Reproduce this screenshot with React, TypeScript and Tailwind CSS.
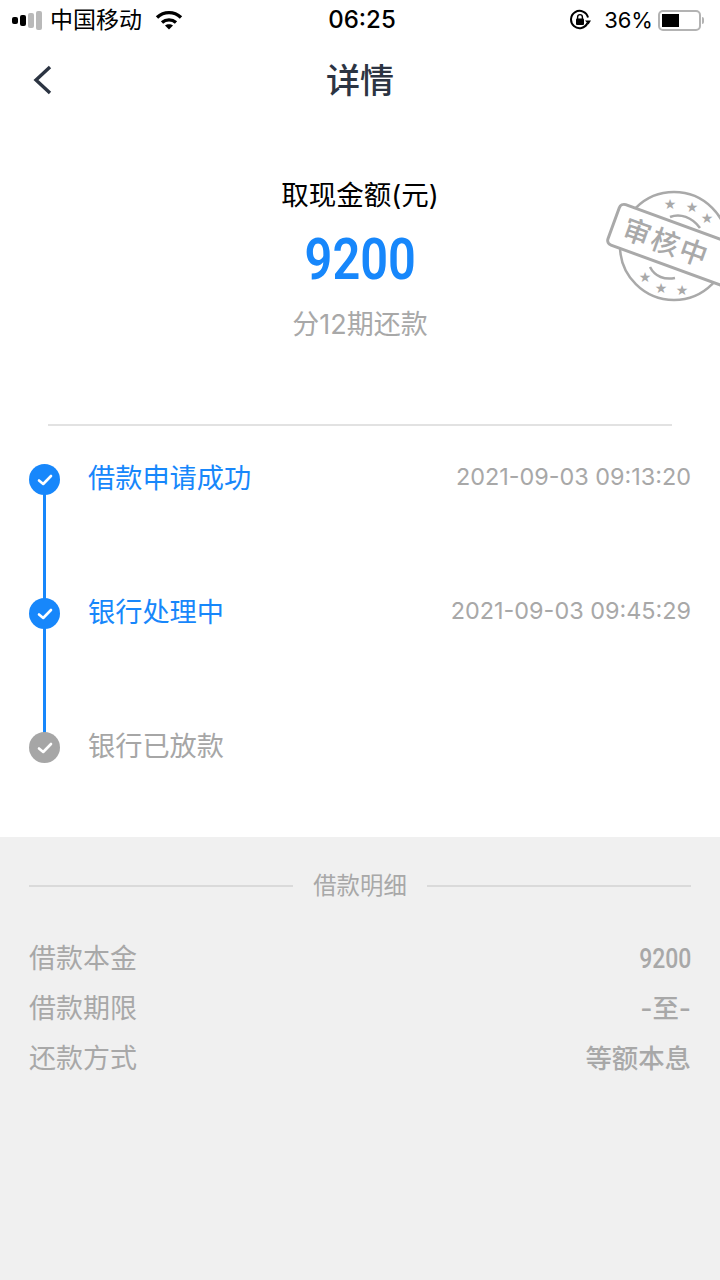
import React from 'react';

const CJK = "font-['Inter','Noto_Sans_CJK_SC',sans-serif]";

const steps = [
  { label: '借款申请成功', time: '2021-09-03 09:13:20', done: true },
  { label: '银行处理中', time: '2021-09-03 09:45:29', done: true },
  { label: '银行已放款', time: '', done: false },
];

const details = [
  { label: '借款本金', value: '9200', digits: true },
  { label: '借款期限', value: '-至-', digits: false },
  { label: '还款方式', value: '等额本息', digits: false },
];

const StatusBar = () => (
  <div className="flex h-10 items-center justify-between pl-3 pr-4 text-black">
    <div className="flex w-[208px] items-center">
      <div className="flex items-center gap-[2px]">
        <span className="h-[7px] w-[6px] rounded-[2px] bg-black" />
        <span className="h-[11px] w-[6px] rounded-[2px] bg-black" />
        <span className="h-[15px] w-[6px] rounded-[2px] bg-[#b9b9b9]" />
        <span className="h-[19px] w-[6px] rounded-[2px] bg-[#b9b9b9]" />
      </div>
      <span className="ml-2 text-[23px] leading-none">中国移动</span>
      <svg className="ml-[13px] h-[20px] w-[28px]" viewBox="0 0 28 20" fill="none" stroke="black" strokeWidth="3.4">
        <path d="M2 7.5C9 1 19 1 26 7.5" />
        <path d="M7 12.5C11 9 17 9 21 12.5" />
        <path d="M14 19.5L10 15.4C12 13.8 16 13.8 18 15.4Z" fill="black" stroke="none" />
      </svg>
    </div>
    <span className="text-[24px] font-medium leading-none">06:25</span>
    <div className="flex w-[200px] items-center justify-end">
      <svg className="h-[22px] w-[22px]" viewBox="0 0 22 22" fill="none">
        <path d="M18.5 14A8.6 8.6 0 1 1 19 8.5" stroke="black" strokeWidth="2" />
        <path d="M16 11.5L19.5 15.5L22 11.5Z" fill="black" />
        <rect x="7" y="9.5" width="8" height="6.5" rx="1" fill="black" />
        <path d="M8.6 10V8a2.4 2.4 0 0 1 4.8 0v2" stroke="black" strokeWidth="1.4" />
      </svg>
      <span className="ml-[13px] text-[22px] leading-none">36%</span>
      <div className="ml-[5px] flex items-center">
        <div className="h-[21px] w-[43px] rounded-[5px] border-2 border-[#b3b3b3] p-[2px]">
          <div className="h-full w-[17px] bg-black" />
        </div>
        <span className="ml-[1px] h-[7px] w-[2px] rounded-r-sm bg-[#b3b3b3]" />
      </div>
    </div>
  </div>
);

// Grey "审核中" seal, clipped by the right edge of the screen
const ReviewStamp = () => (
  <svg className="absolute left-[600px] top-[185px] h-[125px] w-[120px]" viewBox="0 0 120 125" fill="none" stroke="#a9a9a9">
    <circle cx="74" cy="61" r="54" strokeWidth="2.5" />
    <path d="M70 32C80 28 92 32 100 43" strokeWidth="2.5" />
    <path d="M50 82C55 92 65 95 75 93" strokeWidth="2.5" />
    <g fill="#a9a9a9" stroke="none" fontSize="14" fontFamily="'DejaVu Sans',sans-serif" textAnchor="middle">
      <text x="70" y="24">★</text>
      <text x="92" y="27">★</text>
      <text x="107" y="38">★</text>
      <text x="45" y="97">★</text>
      <text x="61" y="108">★</text>
      <text x="82" y="110">★</text>
    </g>
    <g transform="rotate(20 21 18)">
      <rect x="21" y="18" width="130" height="43" rx="5" fill="white" strokeWidth="3" />
      <text x="32" y="50" fontSize="28" fontWeight="500" fill="#a9a9a9" stroke="none" fontFamily="'Noto Sans CJK SC',sans-serif" letterSpacing="2">
        审核中
      </text>
    </g>
  </svg>
);

const StepIcon = ({ done }: { done: boolean }) => (
  <div className={`flex h-[31px] w-[31px] items-center justify-center rounded-full ${done ? 'bg-[#1787fb]' : 'bg-[#a6a6a6]'}`}>
    <svg className="h-[14px] w-[16px]" viewBox="0 0 16 14" fill="none" stroke="white" strokeWidth="2.6" strokeLinecap="round" strokeLinejoin="round">
      <path d="M2 7.5L6.2 11L14 3" />
    </svg>
  </div>
);

const App: React.FC = () => {
  return (
    <div className={`relative h-[1280px] w-[720px] overflow-hidden bg-white ${CJK}`}>
      <StatusBar />

      {/* Nav bar */}
      <div className="relative flex h-20 items-center justify-center">
        <svg className="absolute left-[32px] top-[25px] h-[30px] w-[20px]" viewBox="0 0 20 30" fill="none" stroke="#2c3442" strokeWidth="3.4">
          <path d="M18 2L4 15L18 28" />
        </svg>
        <h1 className="text-[34px] font-medium text-[#2c3442]">详情</h1>
      </div>

      {/* Amount summary */}
      <div className="flex flex-col items-center pt-[54px]">
        <p className="text-[27.5px] leading-[42px] text-black">取现金额(元)</p>
        <p className="mt-[12px] scale-x-[0.84] font-['Roboto',sans-serif] text-[58px] font-semibold leading-[62px] text-[#1787fb]">9200</p>
        <p className="mt-[15px] text-[27px] leading-[40px] text-[#a8a8a8]">分12期还款</p>
      </div>
      <ReviewStamp />

      <div className="mx-12 mt-[79px] h-[2px] bg-[#e2e2e2]" />

      {/* Progress timeline */}
      <div className="px-[29px] pt-[38px]">
        {steps.map((step, i) => (
          <div key={step.label} className="relative flex h-[134px] items-start">
            {i < steps.length - 1 && <div className="absolute left-[14px] top-[30px] h-[106px] w-[3px] bg-[#1787fb]" />}
            <div className="relative">
              <StepIcon done={step.done} />
            </div>
            <span className={`ml-[28px] text-[27.2px] leading-[29px] ${step.done ? 'text-[#1787fb]' : 'text-[#a6a6a6]'}`}>{step.label}</span>
            <span className="ml-auto text-[23.4px] leading-[26px] text-[#a8a8a8]">{step.time}</span>
          </div>
        ))}
      </div>

      {/* Loan details */}
      <div className="absolute inset-x-0 bottom-0 top-[837px] bg-[#f0f0f0] px-[29px] pt-[33px]">
        <div className="flex items-center">
          <div className="h-[2px] flex-1 bg-[#dadada]" />
          <span className="mx-5 text-[23.4px] leading-[32px] text-[#a8a8a8]">借款明细</span>
          <div className="h-[2px] flex-1 bg-[#dadada]" />
        </div>
        <div className="mt-[32px]">
          {details.map((row) => (
            <div key={row.label} className="flex h-[50px] items-center justify-between">
              <span className="text-[27px] text-[#a8a8a8]">{row.label}</span>
              {row.digits ? (
                <span className="origin-right scale-x-[0.85] font-['Roboto',sans-serif] text-[27px] font-medium text-[#a8a8a8]">{row.value}</span>
              ) : (
                <span className="text-[26.4px] font-medium text-[#a8a8a8]">{row.value}</span>
              )}
            </div>
          ))}
        </div>
      </div>
    </div>
  );
};

export default App;
